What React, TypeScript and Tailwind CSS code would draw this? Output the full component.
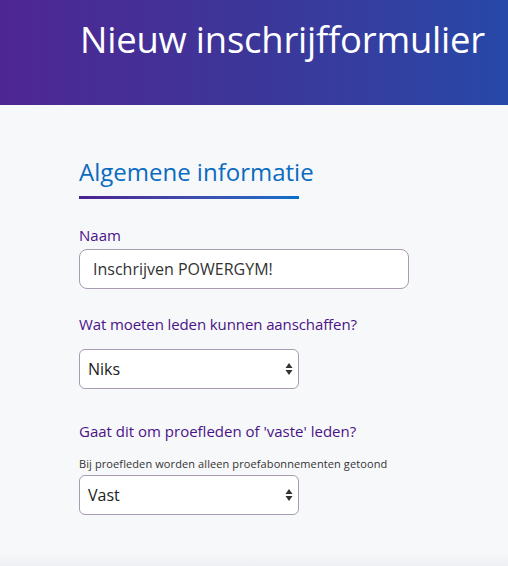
import React from 'react';

const font = { fontFamily: '"Open Sans", "Noto Sans", sans-serif' };

function Arrows() {
  return (
    <svg width="8" height="14" viewBox="0 0 8 14" className="absolute right-[5px] top-1/2 -translate-y-1/2 pointer-events-none">
      <path d="M4 1 L7.5 6 L0.5 6 Z" fill="#333" />
      <path d="M4 13 L7.5 8 L0.5 8 Z" fill="#333" />
    </svg>
  );
}

function Select({ value }: { value: string }) {
  return (
    <div className="relative w-[220px] h-[40px] bg-white border border-[#a89cb3] rounded-[6px] flex items-center pl-[8px] text-[16px] text-[#222]">
      {value}
      <Arrows />
    </div>
  );
}

export default function App() {
  return (
    <div className="w-[508px] h-[566px] overflow-hidden bg-[#f7f8fa] relative" style={font}>
      {/* Header */}
      <div className="h-[105px] bg-gradient-to-r from-[#4e2694] via-[#3c3699] to-[#2648a8] pl-[80px] pt-[13px]">
        <h1 className="text-[36.4px] leading-[52px] text-white font-[450] tracking-[-0.2px]">Nieuw inschrijfformulier</h1>
      </div>

      <div className="pl-[79px] pt-[50px]">
        <h2 className="text-[24px] leading-[33px] text-[#0b6bbf] inline-block">Algemene informatie</h2>
        <div className="mt-[8px] w-[220px] h-[3px] bg-gradient-to-r from-[#4a1f92] to-[#0070c9]" />

        <div className="mt-[26px] text-[15px] leading-[20px] text-[#4a1388]">Naam</div>
        <div className="mt-[4px] w-[330px] h-[40px] bg-white border border-[#a89cb3] rounded-[8px] flex items-center pl-[13px] text-[16px] text-[#333]">
          Inschrijven POWERGYM!
        </div>

        <div className="mt-[25px] text-[15px] leading-[20px] text-[#4a1388] tracking-[-0.1px]">Wat moeten leden kunnen aanschaffen?</div>
        <div className="mt-[15px]">
          <Select value="Niks" />
        </div>

        <div className="mt-[32px] text-[15px] leading-[20px] text-[#4a1388]">Gaat dit om proefleden of 'vaste' leden?</div>
        <div className="mt-[15px] text-[11px] leading-[16px] text-[#333] tracking-[0.1px]">Bij proefleden worden alleen proefabonnementen getoond</div>
        <div className="mt-[3px]">
          <Select value="Vast" />
        </div>
      </div>

      <div className="absolute left-0 right-0 bottom-0 h-[14px] bg-gradient-to-b from-transparent to-[#eef0f3]" />
    </div>
  );
}
